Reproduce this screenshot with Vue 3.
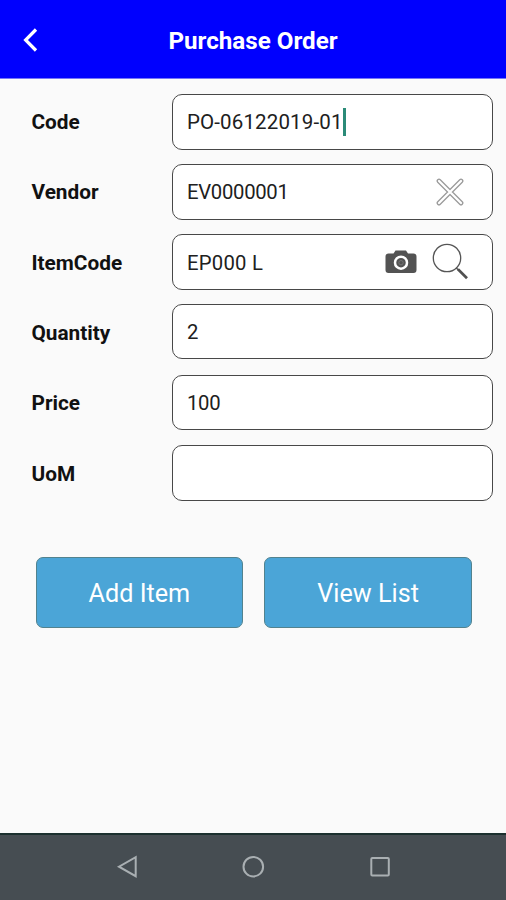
<script setup>
const fields = [
  { label: 'Code', value: 'PO-06122019-01', kind: 'code', caret: true },
  { label: 'Vendor', value: 'EV0000001', kind: 'vendor', clear: true },
  { label: 'ItemCode', value: 'EP000 L', kind: 'item', search: true },
  { label: 'Quantity', value: '2', kind: 'number' },
  { label: 'Price', value: '100', kind: 'number' },
  { label: 'UoM', value: '', kind: 'unit' },
]
</script>

<template>
  <div class="screen">
    <header class="bar">
      <svg class="back" width="20" height="28" viewBox="0 0 20 28">
        <path d="M15 3.5 L4.600 14 L15 24.5" fill="none" stroke="#fff" stroke-width="3.2" />
      </svg>
      <h1 class="title">Purchase Order</h1>
    </header>

    <main class="form">
      <div v-for="f in fields" :key="f.label" class="row" :class="f.kind">
        <span class="label">{{ f.label }}</span>
        <div class="box">
          <span class="value">{{ f.value }}</span>
          <span v-if="f.caret" class="caret"></span>
          <svg v-if="f.clear" class="clear" width="28" height="28" viewBox="0 0 28 28">
            <path d="M3 3 L25 25 M25 3 L3 25" stroke="#999" stroke-width="4.8" stroke-linecap="round" />
            <path d="M3 3 L25 25 M25 3 L3 25" stroke="#fff" stroke-width="2.3" stroke-linecap="round" />
          </svg>
          <svg v-if="f.search" class="camera" width="32" height="24" viewBox="0 0 32 24">
            <path d="M3.500 3.5 H8.5 L10.5 0.500 H21 L23 3.5 H28.500 Q31.500 3.500 31.500 6.500 V20 Q31.500 23 28.500 23 H3.500 Q0.500 23 0.500 20 V6.500 Q0.500 3.500 3.500 3.500Z" fill="#535353" />
            <circle cx="16" cy="12.700" r="6" fill="#535353" stroke="#fff" stroke-width="2.500" />
            <circle cx="16" cy="12.700" r="2.200" fill="none" stroke="#747474" stroke-width="1" />
          </svg>
          <svg v-if="f.search" class="search" width="38" height="38" viewBox="0 0 38 38">
            <circle cx="15" cy="15" r="13.700" fill="none" stroke="#555" stroke-width="1.300" />
            <path d="M24 24.700 L27 27.500" stroke="#555" stroke-width="1.500" />
            <path d="M26 26.200 L35 35.200" stroke="#505050" stroke-width="2.700" />
          </svg>
        </div>
      </div>
    </main>

    <div class="actions">
      <button class="btn">Add Item</button>
      <button class="btn">View List</button>
    </div>

    <nav class="nav">
      <svg width="24" height="24" viewBox="0 0 24 24">
        <path d="M20.700 2.200 V21.200 L4 11.700Z" />
      </svg>
      <svg width="24" height="24" viewBox="0 0 24 24">
        <circle cx="12.300" cy="11.700" r="9.800" />
      </svg>
      <svg width="24" height="24" viewBox="0 0 24 24">
        <rect x="3.300" y="3" width="17.500" height="17.500" rx="1" />
      </svg>
    </nav>
  </div>
</template>

<style>
body {
  margin: 0;
  background: #fafafa;
}
</style>

<style scoped>
.screen {
  width: 506px;
  height: 900px;
  display: flex;
  flex-direction: column;
  background: #fafafa;
  font-family: Roboto, "Liberation Sans", sans-serif;
  color: #111;
  overflow: hidden;
}
.bar {
  height: 79px;
  flex: none;
  display: grid;
  grid-template-columns: 60px 1fr 60px;
  align-items: center;
  background: #0000fe;
  border-bottom: 1px solid #7676f8;
  padding-top: 2px;
  box-sizing: border-box;
}
.back {
  margin-left: 21px;
}
.title {
  margin: 2px 0 0;
  font-size: 24.200px;
  line-height: 32px;
  font-weight: 700;
  color: #fff;
  text-align: center;
  white-space: nowrap;
}
.form {
  display: flex;
  flex-direction: column;
  gap: 14.300px;
  padding: 14.600px 13.500px 0 31.500px;
}
.row {
  display: flex;
  align-items: center;
  height: 56px;
}
.label {
  width: 140.500px;
  flex: none;
  font-size: 20.800px;
  font-weight: 700;
  padding-top: 1px;
  box-sizing: border-box;
}
.box {
  flex: 1;
  height: 56px;
  box-sizing: border-box;
  border: 1px solid #484848;
  border-radius: 10px;
  background: #fff;
  display: flex;
  align-items: center;
  padding: 0 23px 0 14px;
}
.number .box {
  height: 55px;
  margin-bottom: 1px;
}
.value {
  font-size: 20.300px;
  font-weight: 400;
  color: #202020;
  white-space: pre;
  padding-top: 1px;
}
.code .value {
  font-size: 20.500px;
  letter-spacing: 0.140px;
}
.vendor .value {
  letter-spacing: -0.300px;
}
.item .value {
  letter-spacing: 0.250px;
}
.number .value {
  letter-spacing: -0.300px;
}
.caret {
  width: 3px;
  height: 28px;
  background: #2b8b78;
}
.clear {
  margin-left: auto;
  margin-right: 4.500px;
}
.camera {
  margin-left: auto;
  margin-right: 15px;
}
.search {
  margin-right: -1px;
}
.actions {
  display: flex;
  gap: 21px;
  padding: 56px 34px 0 35.500px;
}
.btn {
  flex: 1;
  height: 71px;
  box-sizing: border-box;
  border: 1px solid #52828e;
  border-radius: 7px;
  background: #4ba5d7;
  color: #fff;
  font: 400 25.200px/1 Roboto, "Liberation Sans", sans-serif;
  padding: 3px 0 0;
}
.nav {
  margin-top: auto;
  height: 67px;
  flex: none;
  box-sizing: border-box;
  border-top: 2px solid #1c302f;
  background: #464d52;
  display: flex;
  justify-content: center;
  align-items: center;
  gap: 102.500px;
  padding-bottom: 2px;
}
.nav svg {
  fill: none;
  stroke: #a9afb2;
  stroke-width: 2;
}
</style>
